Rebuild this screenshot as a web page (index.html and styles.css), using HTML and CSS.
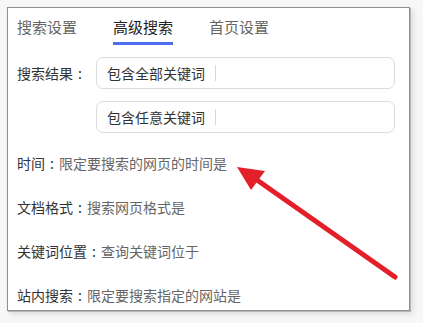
FILE: index.html
```html
<!DOCTYPE html>
<html lang="zh">
<head>
<meta charset="utf-8">
<link rel="stylesheet" href="styles.css">
</head>
<body>
<div class="frame">
  <div class="tabs">
    <div class="tab">搜索设置</div>
    <div class="tab active">高级搜索</div>
    <div class="tab">首页设置</div>
  </div>
  <div class="result-row">
    <div class="label">搜索结果<span class="colon">:</span></div>
    <div class="inputs">
      <div class="input"><span class="input-text">包含全部关键词</span><span class="sep"></span></div>
      <div class="input"><span class="input-text">包含任意关键词</span><span class="sep"></span></div>
    </div>
  </div>
  <div class="line"><span class="key">时间<span class="colon">:</span></span><span class="val">限定要搜索的网页的时间是</span></div>
  <div class="line"><span class="key">文档格式<span class="colon">:</span></span><span class="val">搜索网页格式是</span></div>
  <div class="line"><span class="key">关键词位置<span class="colon">:</span></span><span class="val">查询关键词位于</span></div>
  <div class="line"><span class="key">站内搜索<span class="colon">:</span></span><span class="val">限定要搜索指定的网站是</span></div>
</div>
<svg class="arrow" width="423" height="323" viewBox="0 0 423 323">
  <line x1="395" y1="277" x2="257" y2="180" stroke="#e3202a" stroke-width="5" stroke-linecap="round"/>
  <polygon points="237,167 265,171 251,190" fill="#e3202a"/>
</svg>
</body>
</html>
```

FILE: styles.css
```css
html, body {
  margin: 0;
  padding: 0;
}
body {
  width: 423px;
  height: 323px;
  background: #f7f7f7;
  font-family: "Noto Sans CJK SC", "Noto Sans", sans-serif;
  position: relative;
  overflow: hidden;
}
.frame {
  position: absolute;
  left: 7px;
  top: 7px;
  background: #fff;
  border: 1px solid #8f8f8f;
  box-shadow: 1px 1px 0 #b5b5b5, 3px 3px 6px rgba(0,0,0,0.12);
  padding: 9px 14px 0 9px;
  box-sizing: content-box;
  width: 378px;
  height: 293px;
}
.tabs {
  display: flex;
  gap: 36px;
}
.tab {
  font-size: 15px;
  line-height: 20px;
  color: #666;
  padding-bottom: 5px;
  border-bottom: 3px solid transparent;
}
.tab.active {
  color: #222;
  border-bottom-color: #4e6ef2;
}
.result-row {
  display: flex;
  margin-top: 12px;
  gap: 9px;
}
.label {
  font-size: 14px;
  line-height: 32px;
  color: #333;
  white-space: nowrap;
}
.colon {
  display: inline-block;
  width: 1em;
  text-align: center;
}
.inputs {
  flex: 1;
  display: flex;
  flex-direction: column;
  gap: 12px;
}
.input {
  height: 32px;
  box-sizing: border-box;
  border: 1px solid #dcdcdc;
  border-radius: 7px;
  display: flex;
  align-items: center;
  padding-left: 10px;
}
.input-text {
  font-size: 14px;
  color: #333;
}
.sep {
  width: 1px;
  height: 16px;
  background: #d8d8d8;
  margin-left: 10px;
}
.line {
  font-size: 14px;
  line-height: 20px;
  margin-top: 24px;
  white-space: nowrap;
}
.result-row + .line {
  margin-top: 20px;
}
.key {
  color: #333;
}
.val {
  color: #666;
}
.arrow {
  position: absolute;
  left: 0;
  top: 0;
}
```
